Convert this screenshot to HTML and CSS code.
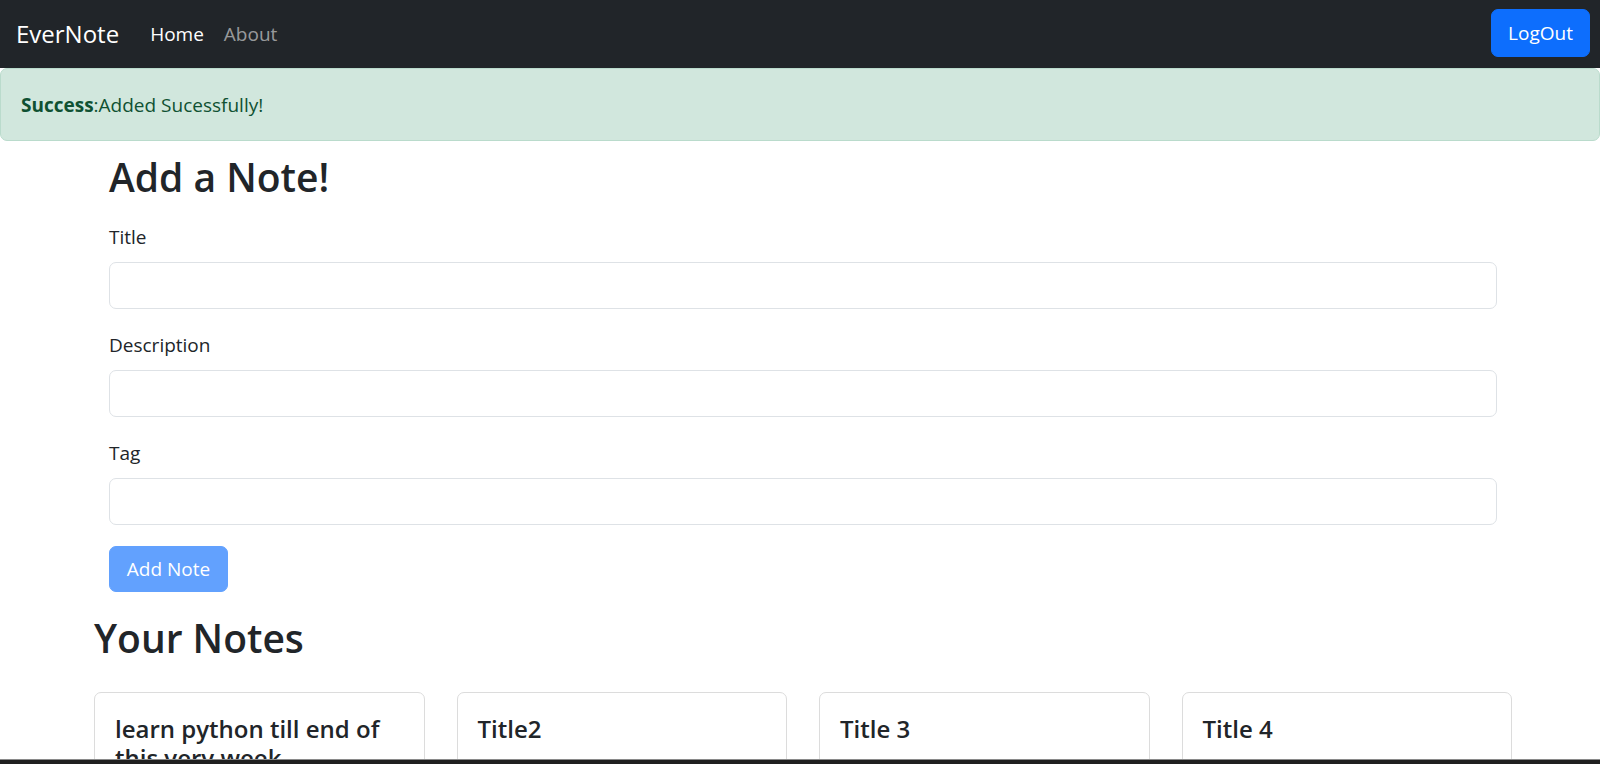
FILE: index.html
```html
<!DOCTYPE html>
<html lang="en">
<head>
<meta charset="utf-8">
<title>EverNote</title>
<link rel="stylesheet" href="styles.css">
</head>
<body>
<nav class="navbar">
  <a class="brand" href="#">EverNote</a>
  <ul class="nav-links">
    <li><a class="nav-link active" href="#">Home</a></li>
    <li><a class="nav-link" href="#">About</a></li>
  </ul>
  <button class="btn btn-primary logout">LogOut</button>
</nav>
<div class="alert"><strong>Success</strong>:Added Sucessfully!</div>
<main class="container">
  <form class="note-form">
    <h2 class="heading">Add a Note!</h2>
    <div class="field">
      <label class="label" for="title">Title</label>
      <input class="input" id="title" type="text">
    </div>
    <div class="field">
      <label class="label" for="description">Description</label>
      <input class="input" id="description" type="text">
    </div>
    <div class="field">
      <label class="label" for="tag">Tag</label>
      <input class="input" id="tag" type="text">
    </div>
    <button type="button" class="btn btn-disabled" disabled>Add Note</button>
  </form>
  <h2 class="heading notes-heading">Your Notes</h2>
  <div class="notes-grid">
    <div class="card"><div class="card-body"><h5 class="card-title">learn python till end of this very week</h5></div></div>
    <div class="card"><div class="card-body"><h5 class="card-title">Title2</h5></div></div>
    <div class="card"><div class="card-body"><h5 class="card-title">Title 3</h5></div></div>
    <div class="card"><div class="card-body"><h5 class="card-title">Title 4</h5></div></div>
  </div>
</main>
<div class="window-edge"></div>
</body>
</html>
```
FILE: styles.css
```css
html, body {
  margin: 0;
  padding: 0;
  overflow: hidden;
  height: 764px;
}
body {
  font-family: "Open Sans", "Noto Sans", sans-serif;
  font-size: 19px;
  line-height: 1.5;
  color: #212529;
  background: #fff;
}
* { box-sizing: border-box; }

.navbar {
  height: 68px;
  background: #212529;
  display: flex;
  align-items: center;
  padding: 0 10px 0 16px;
}
.brand {
  color: #fff;
  font-size: 24px;
  text-decoration: none;
  margin-right: 21px;
  line-height: 30px;
  padding-bottom: 1px;
}
.nav-links {
  list-style: none;
  margin: 0;
  padding: 0;
  display: flex;
  flex: 1;
}
.nav-link {
  display: block;
  padding: 0 10px;
  font-size: 19px;
  color: rgba(255,255,255,0.55);
  text-decoration: none;
  line-height: 30px;
}
.nav-link.active { color: #fff; }

.btn {
  font-family: inherit;
  font-size: 19px;
  line-height: 30px;
  border-radius: 7px;
  border: 1px solid transparent;
  color: #fff;
  cursor: pointer;
}
.btn-primary {
  background: #0d6efd;
  border-color: #0d6efd;
}
.logout {
  width: 99px;
  height: 48px;
  padding: 0;
  margin-top: -2px;
}
.btn-disabled {
  background: #62a1fe;
  border-color: #62a1fe;
  width: 119px;
  height: 46px;
  padding: 0;
  cursor: default;
}

.alert {
  height: 73px;
  background: #d1e7dd;
  border: 1px solid #badbcc;
  border-radius: 7px;
  color: #0f5132;
  padding: 23px 20px 21px;
  line-height: 27px;
}
.alert strong { font-weight: 700; color: #0f5132; }

.container {
  margin-left: 94px;
  width: 1418px;
}
.note-form {
  padding: 0 15px;
}
.heading {
  font-size: 39px;
  font-weight: 600;
  line-height: 48px;
  margin: 12px 0 21px;
}
.field { margin-bottom: 21px; }
.label {
  display: block;
  line-height: 30px;
  margin-bottom: 10px;
}
.input {
  display: block;
  width: 100%;
  height: 47px;
  border: 1px solid #dee2e6;
  border-radius: 7px;
  background: #fff;
  font: inherit;
  padding: 0 15px;
}
.notes-heading {
  margin: 22px 0 30px;
}
.notes-grid {
  display: grid;
  grid-template-columns: repeat(4, 1fr);
  gap: 32px;
}
.card {
  border: 1px solid #dcdcdc;
  border-radius: 7px;
  background: #fff;
}
.card-body {
  padding: 22px 20px 20px;
}
.card-title {
  font-size: 24px;
  font-weight: 600;
  line-height: 1.2;
  margin: 0;
}

.window-edge {
  position: fixed;
  left: 0;
  right: 0;
  bottom: 0;
  height: 5px;
  background: #202020;
  border-top: 1px solid #8a8a8a;
}
```
